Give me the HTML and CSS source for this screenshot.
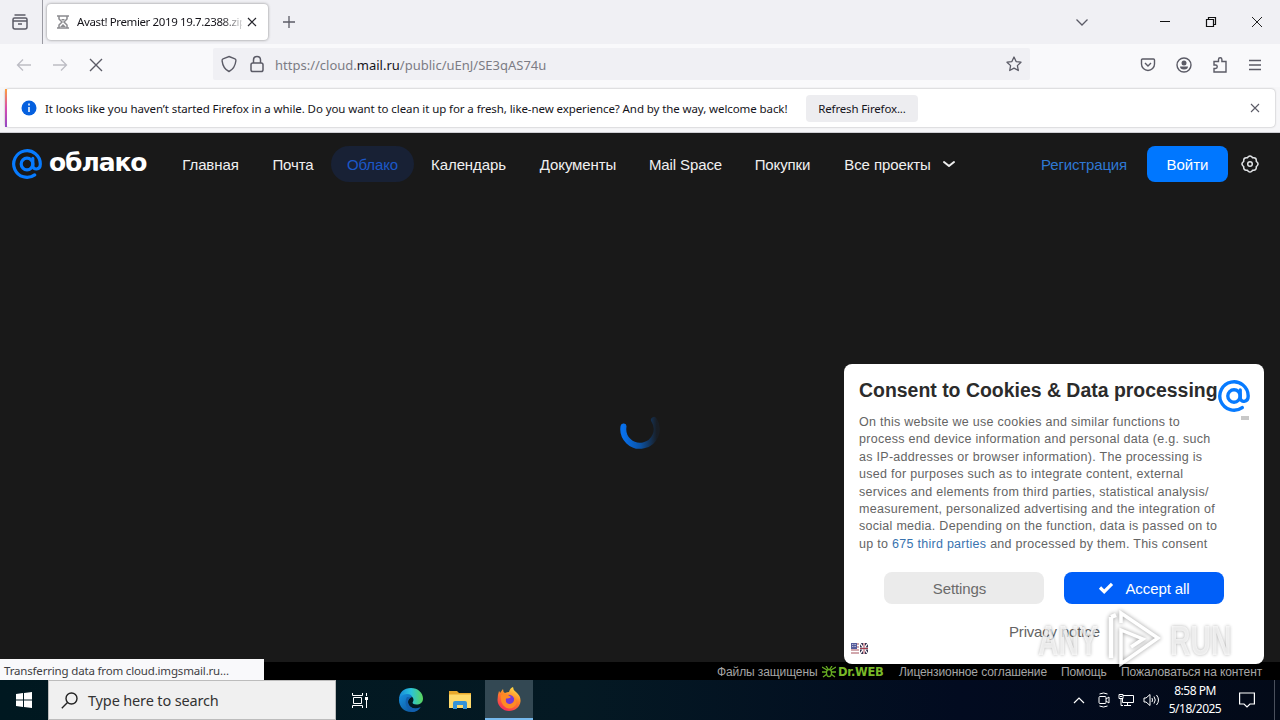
FILE: index.html
```
<!DOCTYPE html>
<html lang="ru">
  <head>
    <meta charset="UTF-8">
    <meta name="viewport" content="width=device-width, initial-scale=1.0">
    <title>Avast! Premier 2019 19.7.2388.zip</title>
    <link rel="stylesheet" href="styles.css">
  </head>

  <body>
    <svg class="defs" width="0" height="0">
      <symbol id="at-logo" viewBox="0 0 32 32">
        <circle cx="16" cy="16" r="6.2" fill="none" stroke="currentColor" stroke-width="3.4"/>
        <path d="M22.2 10v7.5c0 5.5 8 5.2 8-1.5a14.2 14.2 0 1 0-6 11.6" fill="none" stroke="currentColor" stroke-width="3.4" stroke-linecap="round"/>
      </symbol>
    </svg>

    <!-- Browser -->
    <div class="tab-strip">
      <div class="history-box">
        <svg width="18" height="18" viewBox="0 0 18 18" fill="none" stroke="#5b5b66" stroke-width="1.5"><path d="M3.5 2h11M2 8V6.5Q2 5 3.500 5h11Q16 5 16 6.500V14q0 2-2 2H4q-2 0-2-2V8h14M7 11h4"/></svg>
      </div>
      <div class="tab">
        <svg width="12" height="14" viewBox="0 0 12 14" fill="none" stroke="#8b8b8f" stroke-width="1.5"><path d="M0 1h12M0 13h12M2 1v3l3 3-3 3v3M10 1v3L7 7l3 3v3"/><path d="M3 12l3-3 3 3zM4 4h4L6 6z" fill="#8b8b8f" stroke="none"/></svg>
        <span class="tab-title">Avast! Premier 2019 19.7.2388.zip</span>
        <svg width="10" height="10" viewBox="0 0 10 10" stroke="#25252c" stroke-width="1.2"><path d="M1 1l8 8M9 1L1 9"/></svg>
      </div>
      <svg class="new-tab" width="12" height="12" viewBox="0 0 12 12" stroke="#5b5b66" stroke-width="1.3"><path d="M6 0v12M0 6h12"/></svg>
      <div class="window-buttons">
        <svg width="14" height="14" viewBox="0 0 14 14" fill="none" stroke="#5b5b66" stroke-width="1.3"><path d="M1.5 4.5L7 10l5.500-5.500"/></svg>
        <svg width="12" height="12" viewBox="0 0 12 12" stroke="#111" fill="none"><path d="M1 5.5h10"/></svg>
        <svg width="12" height="12" viewBox="0 0 12 12" stroke="#111" stroke-width="1.2" fill="none"><path d="M1.5 3.5h7v7h-7zM3.500 3V1.500h7v7H9"/></svg>
        <svg width="12" height="12" viewBox="0 0 12 12" stroke="#222"><path d="M1 1l10 10M11 1L1 11"/></svg>
      </div>
    </div>

    <div class="toolbar">
      <div class="nav-icons">
        <svg width="16" height="16" viewBox="0 0 16 16" fill="none" stroke="#bdbdc4" stroke-width="1.3"><path d="M15 8H1.500M7 2.500L1.500 8 7 13.500"/></svg>
        <svg width="16" height="16" viewBox="0 0 16 16" fill="none" stroke="#bdbdc4" stroke-width="1.3"><path d="M1 8h13.500M9 2.500L14.500 8 9 13.500"/></svg>
        <svg width="16" height="16" viewBox="0 0 16 16" fill="none" stroke="#5b5b66" stroke-width="1.4"><path d="M2 2l12 12M14 2L2 14"/></svg>
      </div>
      <div class="url-bar">
        <svg width="16" height="18" viewBox="0 0 16 18" fill="none" stroke="#5b5b66" stroke-width="1.4"><path d="M8 1.500l6 2.300c.8.300 1 1 .9 2C14.300 11 12 14.500 8 16.500 4 14.500 1.700 11 1.100 5.800c-.1-1 .1-1.700.9-2z"/></svg>
        <svg width="14" height="18" viewBox="0 0 14 18" fill="none" stroke="#5b5b66" stroke-width="1.500"><rect x="1" y="8" width="12" height="8.500" rx="1.800"/><path d="M3.500 8V5q0-3.500 3.500-3.500T10.500 5v3"/></svg>
        <span class="url">https://cloud.<b>mail.ru</b>/public/uEnJ/SE3qAS74u</span>
        <svg width="16" height="16" viewBox="0 0 16 16" fill="none" stroke="#5b5b66" stroke-width="1.300" stroke-linejoin="round"><path d="M8 1l2.100 4.600 4.900.600-3.600 3.400.900 4.900L8 12.100l-4.300 2.400.900-4.900L1 6.200l4.900-.600z"/></svg>
      </div>
      <div class="toolbar-actions">
        <svg width="16" height="16" viewBox="0 0 16 16" fill="none" stroke="#5b5b66" stroke-width="1.400"><path d="M2.500 2h11q1 0 1 1v4a6.500 6.500 0 0 1-13 0V3q0-1 1-1zM5 6l3 3 3-3"/></svg>
        <svg width="16" height="16" viewBox="0 0 16 16"><circle cx="8" cy="8" r="7" fill="none" stroke="#5b5b66" stroke-width="1.400"/><circle cx="8" cy="6" r="2.500" fill="#5b5b66"/><path d="M4 9.500h8q0 3-4 3t-4-3z" fill="#5b5b66"/></svg>
        <svg width="16" height="18" viewBox="0 0 16 18" fill="none" stroke="#5b5b66" stroke-width="1.400"><path d="M2 9V5.500h4.500V3.500a1.700 1.700 0 0 1 3.400 0v2H14v10.500H2v-3.500h1.500a1.700 1.700 0 0 0 0-3.500z"/></svg>
        <svg width="14" height="12" viewBox="0 0 14 12" stroke="#5b5b66" stroke-width="1.300"><path d="M1 1.500h12M1 6h12M1 10.500h12"/></svg>
      </div>
    </div>

    <div class="notification-box">
      <div class="notification">
        <svg width="16" height="16" viewBox="0 0 16 16"><circle cx="8" cy="8" r="7.500" fill="#0560df"/><path d="M8 7v5M8 3.500v2" stroke="#fff" stroke-width="1.500"/></svg>
        <span class="notification-text">It looks like you haven’t started Firefox in a while. Do you want to clean it up for a fresh, like-new experience? And by the way, welcome back!</span>
        <button class="refresh-btn">Refresh Firefox...</button>
        <svg class="notification-close" width="10" height="10" viewBox="0 0 10 10" stroke="#5b5b66" stroke-width="1.100"><path d="M1 1l8 8M9 1L1 9"/></svg>
      </div>
    </div>

    <!-- Page -->
    <main class="page">
      <header class="header">
        <a class="logo">
          <svg width="30" height="32"><use href="#at-logo"/></svg>
          <span>облако</span>
        </a>
        <nav class="nav">
          <a>Главная</a>
          <a>Почта</a>
          <a class="active">Облако</a>
          <a>Календарь</a>
          <a>Документы</a>
          <a>Mail Space</a>
          <a>Покупки</a>
          <a>Все проекты</a>
          <svg width="14" height="8" viewBox="0 0 14 8" fill="none" stroke="#eee" stroke-width="2" stroke-linecap="round" stroke-linejoin="round"><path d="M2 2l5 4 5-4"/></svg>
        </nav>
        <a class="register">Регистрация</a>
        <button class="login-btn">Войти</button>
        <svg width="18" height="18" viewBox="0 0 18 18" fill="none" stroke="#e1e3e6" stroke-width="1.500" stroke-linejoin="round"><path d="M7.200 1.800Q9 .2 10.800 1.800L11.500 2.700 12.800 2.700Q15.200 2.800 15.300 5.200L15.300 6.500 16.200 7.300Q17.800 9 16.200 10.700L15.300 11.500 15.300 12.800Q15.200 15.200 12.800 15.300L11.500 15.300 10.800 16.200Q9 17.800 7.200 16.200L6.500 15.300 5.200 15.300Q2.800 15.200 2.700 12.800L2.700 11.500 1.800 10.700Q.2 9 1.800 7.300L2.700 6.500 2.700 5.200Q2.800 2.800 5.200 2.700L6.500 2.700z"/><circle cx="9" cy="9" r="2.300"/></svg>
      </header>

      <div class="loader">
        <svg width="40" height="40" viewBox="0 0 40 40">
          <defs><linearGradient id="spin"><stop offset="0" stop-color="#0870eb"/><stop offset=".5" stop-color="#0b54a8"/><stop offset="1" stop-color="#191e25"/></linearGradient></defs>
          <path d="M3.500 16.500a16.700 16.700 0 1 0 30.500-6.500" fill="none" stroke="url(#spin)" stroke-width="6" stroke-linecap="round"/>
        </svg>
      </div>

      <footer class="footer">
        <span class="f-safe">Файлы защищены</span>
        <span class="drweb"><svg width="14" height="12" viewBox="0 0 14 12" fill="none" stroke="#67ae22" stroke-width="1.300"><path d="M0 1l5 3M0 6h4M1 11l4-3M14 1L9 4M14 6h-4M13 11L9 8M4 0l2 3M10 0L8 3"/><ellipse cx="7" cy="7" rx="2.500" ry="3.500"/></svg>Dr.WEB</span>
        <span class="f-license">Лицензионное соглашение</span>
        <span class="f-help">Помощь</span>
        <span>Пожаловаться на контент</span>
      </footer>
    </main>

    <div class="status-text">Transferring data from cloud.imgsmail.ru...</div>

    <section class="consent">
      <svg class="consent-logo" width="32" height="32"><use href="#at-logo"/></svg>
      <i class="scroll-thumb"></i>
      <h2>Consent to Cookies &amp; Data processing</h2>
      <p class="consent-text">
        On this website we use cookies and similar functions to<br>
        process end device information and personal data (e.g. such<br>
        as IP-addresses or browser information). The processing is<br>
        used for purposes such as to integrate content, external<br>
        services and elements from third parties, statistical analysis/<br>
        measurement, personalized advertising and the integration of<br>
        social media. Depending on the function, data is passed on to<br>
        up to <a>675 third parties</a> and processed by them. This consent
      </p>
      <div class="consent-buttons">
        <button class="settings-btn">Settings</button>
        <button class="accept-btn"><svg width="16" height="12" viewBox="0 0 16 12" fill="none" stroke="#fff" stroke-width="3.200"><path d="M2 5.500l4.200 4.200L14 1.800"/></svg>Accept all</button>
      </div>
      <a class="privacy">Privacy notice</a>
      <svg class="flags" width="17" height="11" viewBox="0 0 17 11"><path fill="#fff" d="M0 0h17v11H0z"/><path d="M0 1h8M0 4h8M0 7h8M0 10h8" stroke="#a5525d" stroke-width="1.200"/><path d="M0 0h6v6H0z" fill="#555c9b"/><path d="M1 1.500h4M1 3.500h4" stroke="#fff" stroke-width=".6" stroke-dasharray="1 .6"/><path d="M9 0h8v11H9z" fill="#32324f"/><path d="M9 0l8 11M17 0L9 11" stroke="#fff" stroke-width="1.300"/><path d="M13 0v11M9 5.500h8" stroke="#fff" stroke-width="2"/><path d="M13 0v11M9 5.500h8" stroke="#a33f50" stroke-width="1"/></svg>
    </section>

    <div class="watermark">
      <span>ANY</span>
      <svg width="54" height="62" viewBox="0 0 54 62" fill="none" stroke="#fff" stroke-width="3.500"><path d="M14 14V4l37 25-37 26V21l22 9-12 8"/><path d="M4 8v41M4 8l5-2" stroke-width="4.500"/></svg>
      <span>RUN</span>
    </div>

    <!-- Windows taskbar -->
    <div class="taskbar">
      <div class="start"><svg width="16" height="16" viewBox="0 0 16 16" fill="#fff"><path d="M0 2l7-1v6.500H0zM8 1l8-1v7.500H8zM0 8.500h7V15l-7-1zM8 8.500h8V16l-8-1z"/></svg></div>
      <div class="search">
        <svg width="17" height="17" viewBox="0 0 17 17" fill="none" stroke="#222" stroke-width="1.400"><circle cx="10.500" cy="6.500" r="5.500"/><path d="M6.500 10.500L.8 16.200"/></svg>
        <span>Type here to search</span>
      </div>
      <div class="app"><svg width="17" height="17" viewBox="0 0 17 17" fill="none" stroke="#fff"><path d="M.5 1v2.500h10V1M.5 16v-2.500h10V16M1.500 5.500h8v6h-8zM14.500 1v3M14.500 8v8"/><path d="M13 5h3v3h-3z" fill="#fff" stroke="none"/></svg></div>
      <div class="app"><svg width="26" height="26" viewBox="0 0 26 26">
        <defs><linearGradient id="edgeTop"><stop offset="0" stop-color="#1788d8"/><stop offset=".5" stop-color="#2ac3dc"/><stop offset="1" stop-color="#5bd65a"/></linearGradient><linearGradient id="edgeLow" x2="1" y2="1"><stop offset="0" stop-color="#1690df"/><stop offset="1" stop-color="#0c4b91"/></linearGradient></defs>
        <path d="M1 13C1 5 6 1 13 1s12 5 12 10.500c0 4-3 6-6.500 6-3 0-4.500-1.300-3.800-2.300C17 12 14 8 10 8c-5 0-9 3-9 5z" fill="url(#edgeTop)"/>
        <path d="M1 13c0-3 4-6 8-6 3.500 0 5 1.500 5 3-3 1-4 3-4 5 0 4 4 7 8 6.500 2-.2 3.500-1 4.500-1.500C20 23.500 17 25 13 25 6 25 1 19.500 1 13z" fill="url(#edgeLow)"/>
        <path d="M9 10c-3 5-1 12 5 15 4 0 7-2 8.800-5-6 3.500-12.800 0-12.800-5 0-2 1-3.500 2.500-4.500z" fill="#125fae"/></svg></div>
      <div class="app"><svg width="22" height="20" viewBox="0 0 22 20"><path d="M0 1h8l2 2h12v15H0z" fill="#e9a92c"/><path d="M0 4.500h22V18H0z" fill="#ffda6b"/><path d="M4 19v-6q0-2 2-2h10q2 0 2 2v6h-4v-4H8v4z" fill="#3593d8"/></svg></div>
      <div class="app running"><svg width="26" height="26" viewBox="0 0 26 26">
        <defs><linearGradient id="fox" x1=".8" y1="0" x2=".3" y2="1"><stop offset="0" stop-color="#ffe84b"/><stop offset=".45" stop-color="#ff8427"/><stop offset="1" stop-color="#f52b5c"/></linearGradient></defs>
        <path d="M3 5q1 1 1 2l3-4q0 3 2 4 2-1 4-1 1-4 4-5 0 3 3 5 5 4 4.500 9.500C24 21 19 25 13 25S1.500 20 1.500 14q0-5 1.500-9z" fill="url(#fox)"/><circle cx="13" cy="14" r="5.300" fill="#7439d7"/><path d="M5 9q4-2 7 0l3 2q-2 2-5 1.500Q9 18 14 18q5-1 4-7 5 6 0 10-6 4-11-2Q4 15 5 9z" fill="#ff8a24"/></svg></div>
      <div class="tray">
        <svg width="12" height="8" viewBox="0 0 12 8" fill="none" stroke="#fff" stroke-width="1.200"><path d="M1 7l5-5 5 5"/></svg>
        <svg width="12" height="16" viewBox="0 0 12 16" fill="none" stroke="#fff"><rect x="1" y="4.500" width="7" height="7" rx="1"/><path d="M8 7l3-2v6L8 9M1.500 2q4-2 8 0M1.500 14q4 2 8 0"/></svg>
        <svg width="17" height="16" viewBox="0 0 17 16" fill="none" stroke="#fff"><path d="M5 3.500h10.500v7H4.500V7M9.500 10.500v3M6 13.500h7M1 2.500h4v4H1zM3 6.500v7h2M2 4.500h2"/></svg>
        <svg width="17" height="16" viewBox="0 0 17 16" fill="none" stroke="#fff"><path d="M1 6h2l4-3.500v11L3 10H1zM9 6q1 2 0 4M11 4.500q2.500 3.500 0 7M13.500 3q4 5 0 10"/></svg>
        <div class="clock"><span>8:58 PM</span><span>5/18/2025</span></div>
        <svg width="16" height="16" viewBox="0 0 16 16" fill="none" stroke="#fff" stroke-width="1.200"><path d="M.6 1h14.800v11H11l-3 3-3-3H.6z"/></svg>
        <i class="show-desktop"></i>
      </div>
    </div>
  </body>

</html>
```
FILE: styles.css
```
* {
  box-sizing: border-box;
  margin: 0;
  padding: 0;
}

body {
  width: 1280px;
  height: 720px;
  overflow: hidden;
  font-family: "Noto Sans", "Open Sans", sans-serif;
  font-size: 12px;
  background: #191919;
  position: relative;
  display: flex;
  flex-direction: column;
  white-space: nowrap;
}

svg {
  display: block;
  flex-shrink: 0;
}

button {
  border: none;
  font: inherit;
}

.defs {
  position: absolute;
}

/* browser tabs */
.tab-strip {
  height: 44px;
  flex-shrink: 0;
  background: #f0f0f4;
  display: flex;
  align-items: center;
}

.history-box {
  width: 43px;
  height: 44px;
  border-right: 1px solid #9a9aa2;
  padding: 13px 0 0 11px;
}

.tab {
  width: 221px;
  height: 36px;
  margin: -1px 0 0 4px;
  padding: 0 11px 0 10px;
  display: flex;
  align-items: center;
  background: #fff;
  border-radius: 4px;
  box-shadow: 0 0 3px rgba(0, 0, 0, 0.45);
}

.tab-title {
  width: 166px;
  margin: 0 5px 0 8px;
  font-size: 11.5px;
  letter-spacing: -0.38px;
  overflow: hidden;
  color: #15141a;
  -webkit-mask-image: linear-gradient(to right, #000 144px, transparent 169px);
  mask-image: linear-gradient(to right, #000 144px, transparent 169px);
}

.new-tab {
  margin-left: 15px;
}

.window-buttons {
  margin-left: auto;
  padding-right: 17px;
  display: flex;
  align-items: center;
}

.window-buttons svg:nth-child(2) {
  margin-left: 70px;
}

.window-buttons svg:nth-child(n+3) {
  margin-left: 34px;
}

/* toolbar */
.toolbar {
  height: 43px;
  flex-shrink: 0;
  padding-bottom: 2px;
  background: #f9f9fb;
  display: flex;
  align-items: center;
}

.nav-icons {
  width: 213px;
  padding-left: 16px;
  display: flex;
  gap: 20px;
}

.url-bar {
  width: 817px;
  height: 32px;
  margin-top: -1px;
  padding: 0 8px;
  display: flex;
  align-items: center;
  background: #f0f0f4;
  border-radius: 2px;
}

.url-bar svg:nth-child(2) {
  margin-left: 13px;
}

.url {
  flex: 1;
  margin-left: 11px;
  padding-top: 1px;
  font-size: 13px;
  color: #7c7c84;
}

.url b {
  font-weight: normal;
  color: #15141a;
}

.toolbar-actions {
  margin-left: auto;
  padding-right: 17px;
  display: flex;
  align-items: center;
  gap: 20px;
}

.toolbar-actions svg {
  margin-left: -1px;
  margin-right: 1px;
}

.notification-box {
  height: 46px;
  flex-shrink: 0;
  padding: 2px 5px 0;
  background: #f6f6f8;
  border-bottom: 1px solid #cfcfd4;
}

.notification {
  height: 38px;
  padding: 0 15px 0 14px;
  display: flex;
  align-items: center;
  background: #fff;
  border-radius: 4px;
  box-shadow: 0 0 2px rgba(0, 0, 0, 0.35);
  border-left: 2px solid;
  border-image: linear-gradient(#ffa436, #d74cb0, #8f47c4) 1;
}

.notification-text {
  width: 743px;
  margin: 0 18px 0 8px;
  font-size: 11.5px;
  letter-spacing: -0.09px;
  color: #15141a;
}

.refresh-btn {
  width: 112px;
  height: 27px;
  background: #ededf0;
  border-radius: 4px;
  font-size: 11.5px;
  letter-spacing: -0.15px;
  color: #15141a;
}

.notification-close {
  margin-left: auto;
}

/* cloud page */
.page {
  height: 547px;
  background: #191919;
  display: flex;
  flex-direction: column;
  font-family: "Liberation Sans", Arial, sans-serif;
}

.header {
  height: 62px;
  padding-left: 12px;
  display: flex;
  align-items: center;
  color: #f0f0f0;
  font-size: 15px;
}

.logo {
  width: 154px;
  display: flex;
  align-items: center;
  gap: 7px;
  color: #077bff;
}

.logo span {
  color: #fff;
  font: bold 25px/30px "DejaVu Sans", sans-serif;
  letter-spacing: -1.1px;
  margin-top: -3px;
}

.nav {
  width: 874px;
  display: grid;
  grid-template-columns: 89px 76px 83px 109px 110px 105px 89px 121px 14px;
  align-items: center;
  text-align: center;
  letter-spacing: -0.1px;
}

.nav a {
  height: 36px;
  line-height: 38px;
}

.nav .active {
  background: #182135;
  border-radius: 18px;
  color: #1c58c8;
}

.nav svg {
  margin-left: -6px;
}

.register {
  width: 87px;
  margin-left: 1px;
  color: #2f78d3;
  letter-spacing: -0.15px;
}

.login-btn {
  width: 81px;
  height: 36px;
  margin: 0 13px 0 19px;
  border-radius: 8px;
  background: #07f;
  color: #fff;
}

.loader {
  flex: 1;
  display: flex;
  justify-content: center;
  padding-top: 215px;
}

.footer {
  height: 18px;
  padding: 2px 0 0 717px;
  display: flex;
  align-items: center;
  background: #000;
  color: #a5a5a5;
  font-size: 12px;
  letter-spacing: -0.1px;
}

.f-safe {
  width: 105px;
}

.drweb {
  width: 77px;
  display: flex;
  align-items: center;
  gap: 2px;
  color: #79b928;
  font: bold 11.5px "DejaVu Sans", sans-serif;
  letter-spacing: -0.3px;
}

.f-license {
  width: 162px;
}

.f-help {
  width: 60px;
}

.status-text {
  position: absolute;
  left: 0;
  top: 659px;
  width: 264px;
  height: 21px;
  padding-left: 4px;
  background: #f9f9fb;
  color: #3d3d42;
  font-size: 11.5px;
  letter-spacing: -0.17px;
  line-height: 24px;
}

/* cookie window */
.consent {
  position: absolute;
  left: 844px;
  top: 364px;
  width: 420px;
  height: 300px;
  padding: 15px 15px 0;
  background: #fff;
  border-radius: 8px;
  font-family: "Liberation Sans", Arial, sans-serif;
  color: #646464;
}

.consent h2 {
  font-size: 19.45px;
  line-height: 23px;
  color: #2b2b2b;
}

.consent-logo {
  position: absolute;
  right: 14px;
  top: 16px;
  color: #077bff;
}

.scroll-thumb {
  position: absolute;
  right: 15px;
  top: 52px;
  width: 8px;
  height: 4px;
  background: #c8c8c8;
}

.consent-text {
  margin-top: 12px;
  height: 138px;
  font-size: 12.5px;
  line-height: 17.4px;
  letter-spacing: 0.28px;
}

.consent-text a {
  color: #3973af;
}

.consent-buttons {
  margin: 20px 25px 0;
  display: flex;
  gap: 20px;
}

.consent-buttons button {
  width: 160px;
  height: 32px;
  border-radius: 8px;
  background: #ebebeb;
  color: #6a6a6a;
  font-size: 15px;
  letter-spacing: -0.1px;
  display: flex;
  align-items: center;
  justify-content: center;
}

.consent-buttons .settings-btn {
  padding-right: 9px;
}

.consent-buttons .accept-btn {
  background: #005ff9;
  color: #fff;
  gap: 11px;
}

.privacy {
  display: block;
  margin: 19px 0 0 150px;
  font-size: 15px;
  letter-spacing: -0.18px;
}

.flags {
  position: absolute;
  left: 7px;
  bottom: 10px;
}

.watermark {
  position: absolute;
  left: 1038px;
  top: 609px;
  display: flex;
  align-items: center;
  gap: 9px;
  font: bold 43px/60px "Liberation Sans", sans-serif;
  color: rgba(255, 255, 255, 0.7);
  text-shadow: 0 0 4px rgba(0, 0, 0, 0.3);
}

.watermark span {
  width: 60px;
  transform: scaleX(0.66);
  transform-origin: left;
}

.watermark svg {
  opacity: 0.8;
  filter: drop-shadow(0 0 2px rgba(0, 0, 0, 0.5));
}

/* taskbar */
.taskbar {
  height: 40px;
  background: linear-gradient(to right, #001820, #041923 45%, #020b20 75%, #030a18);
  display: flex;
}

.start {
  width: 48px;
  display: flex;
  align-items: center;
  justify-content: center;
}

.search {
  width: 288px;
  height: 40px;
  padding: 0 12px;
  display: flex;
  align-items: center;
  gap: 10px;
  background: #f0f0f0;
  border: 1px solid #bcbcbc;
  color: #333;
  font-size: 14.5px;
  letter-spacing: -0.15px;
}

.app {
  width: 48px;
  height: 40px;
  margin-left: 1px;
  display: flex;
  align-items: center;
  justify-content: center;
}

.app:nth-child(3) {
  margin-left: 0;
}

.app:nth-child(4) {
  margin-left: 3px;
}

.running {
  background: #334853;
  border-bottom: 2px solid #76b9ed;
}

.tray {
  margin-left: auto;
  width: 208px;
  padding: 0 0 0 1px;
  display: flex;
  align-items: center;
  color: #fff;
}

.tray svg:nth-child(2) {
  margin-left: 13px;
}

.tray svg:nth-child(3) {
  margin-left: 8px;
}

.tray svg:nth-child(4) {
  margin-left: 8px;
}

.clock {
  width: 70px;
  margin: 0 9px 0 0;
  display: flex;
  flex-direction: column;
  align-items: center;
  line-height: 18px;
  letter-spacing: -0.5px;
}

.show-desktop {
  width: 1px;
  height: 40px;
  margin-left: 19px;
  background: #4a505c;
}
```
